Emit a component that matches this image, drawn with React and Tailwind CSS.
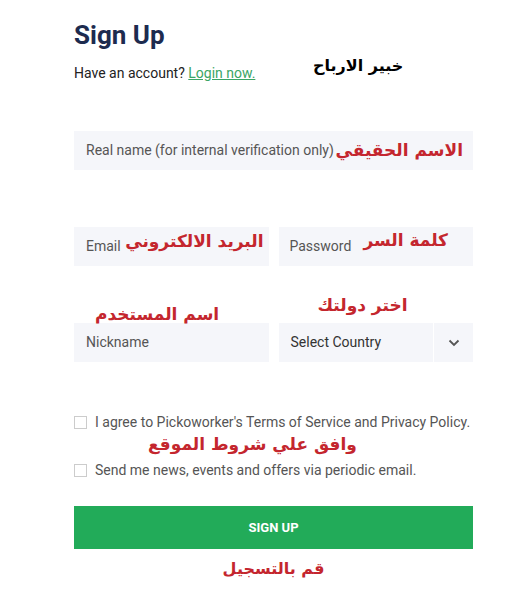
import React from "react";

const ar = { fontFamily: '"DejaVu Sans", sans-serif' };

export default function App() {
  return (
    <div className="w-[519px] h-[608px] bg-white relative" style={{ fontFamily: 'Roboto, "Liberation Sans", sans-serif' }}>
      <div className="ml-[74px] w-[399px] pt-[20px]">
        <div className="relative">
          <h1 className="text-[26px] leading-[30px] font-bold text-[#1d2b4f]">Sign Up</h1>
          <p className="mt-[15px] text-[14px] leading-[16px] text-[#222]">
            Have an account? <a href="#" className="text-[#3aa565] underline">Login now.</a>
          </p>
          <div className="absolute left-[239px] top-[34px] text-[16px] font-bold text-black whitespace-nowrap" dir="rtl" style={ar}>خبير الارباح</div>
        </div>

        <div className="mt-[50px] relative h-[39px] bg-[#f5f6fa] flex items-center px-[12px]">
          <span className="text-[14px] text-[#555]">Real name (for internal verification only)</span>
          <span className="absolute right-[10px] top-[7px] text-[17px] font-bold text-[#c4262e] whitespace-nowrap" dir="rtl" style={ar}>الاسم الحقيقي</span>
        </div>

        <div className="mt-[57px] grid grid-cols-2 gap-[10px]">
          <div className="relative h-[39px] bg-[#f5f6fa] flex items-center px-[12px]">
            <span className="text-[14px] text-[#555]">Email</span>
            <span className="absolute right-[5px] top-[2px] text-[17px] font-bold text-[#c4262e] whitespace-nowrap" dir="rtl" style={ar}>البريد الالكتروني</span>
          </div>
          <div className="relative h-[39px] bg-[#f5f6fa] flex items-center px-[11px]">
            <span className="text-[14px] text-[#555]">Password</span>
            <span className="absolute right-[25px] top-[1px] text-[17px] font-bold text-[#c4262e] whitespace-nowrap" dir="rtl" style={ar}>كلمة السر</span>
          </div>
        </div>

        <div className="mt-[26px] grid grid-cols-2 gap-[10px] h-[31px]">
          <div className="relative">
            <span className="absolute left-[21px] top-[10px] text-[17px] font-bold text-[#c4262e] whitespace-nowrap" dir="rtl" style={ar}>اسم المستخدم</span>
          </div>
          <div className="relative">
            <span className="absolute left-[39px] top-[1px] text-[17px] font-bold text-[#c4262e] whitespace-nowrap" dir="rtl" style={ar}>اختر دولتك</span>
          </div>
        </div>

        <div className="grid grid-cols-2 gap-[10px]">
          <div className="h-[39px] bg-[#f5f6fa] flex items-center px-[12px]">
            <span className="text-[14px] text-[#555]">Nickname</span>
          </div>
          <div className="h-[39px] bg-[#f5f6fa] flex items-center">
            <span className="flex-1 pl-[12px] text-[14px] text-[#333]">Select Country</span>
            <div className="w-[40px] h-full border-l border-white flex items-center justify-center">
              <svg width="12" height="8" viewBox="0 0 12 8" fill="none">
                <path d="M1.5 1.5 L6 6 L10.5 1.5" stroke="#555" strokeWidth="1.8" />
              </svg>
            </div>
          </div>
        </div>

        <div className="mt-[52px] flex items-center gap-[8px] h-[16px]">
          <span className="w-[13px] h-[13px] border border-[#ccc] bg-white shrink-0"></span>
          <span className="text-[14px] leading-[16px] text-[#555] whitespace-nowrap">I agree to Pickoworker's Terms of Service and Privacy Policy.</span>
        </div>
        <div className="h-[32px] relative">
          <span className="absolute left-[74px] top-[2px] text-[17px] font-bold text-[#c4262e] whitespace-nowrap" dir="rtl" style={ar}>وافق علي شروط الموقع</span>
        </div>
        <div className="flex items-center gap-[8px] h-[16px]">
          <span className="w-[13px] h-[13px] border border-[#ccc] bg-white shrink-0"></span>
          <span className="text-[14px] leading-[16px] text-[#555] whitespace-nowrap">Send me news, events and offers via periodic email.</span>
        </div>

        <button className="mt-[28px] w-full h-[43px] bg-[#22ab59] text-white text-[13px] font-bold">SIGN UP</button>
        <div className="mt-[8px] text-center text-[16px] font-bold text-[#c4262e]" dir="rtl" style={ar}>قم بالتسجيل</div>
      </div>
    </div>
  );
}
